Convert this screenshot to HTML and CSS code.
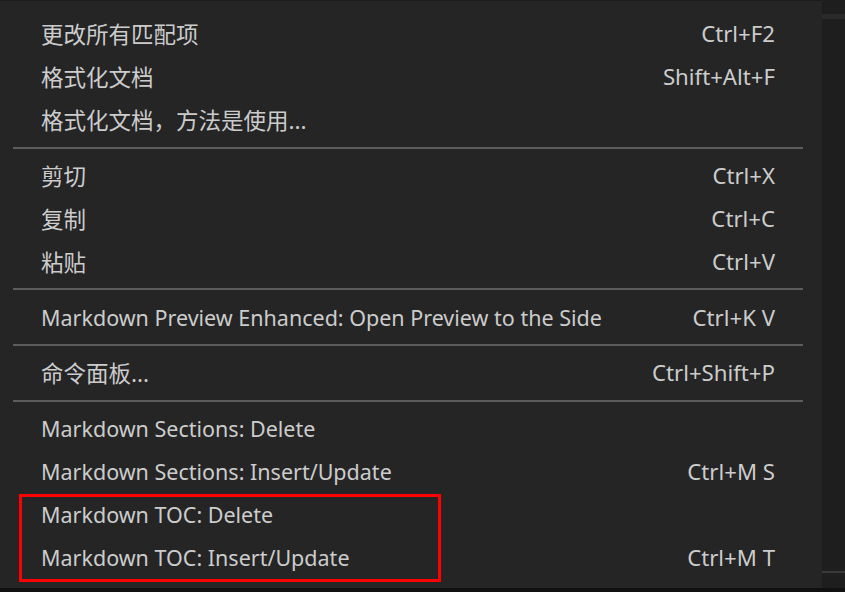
FILE: index.html
```html
<!DOCTYPE html>
<html lang="zh-CN">
<head>
<meta charset="utf-8">
<link rel="stylesheet" href="styles.css">
</head>
<body>
<div class="screen">
  <div class="menu">
    <div class="item"><span class="label cjk">更改所有匹配项</span><span class="key">Ctrl+F2</span></div>
    <div class="item"><span class="label cjk">格式化文档</span><span class="key">Shift+Alt+F</span></div>
    <div class="item"><span class="label cjk">格式化文档，方法是使用...</span></div>
    <div class="sep"></div>
    <div class="item"><span class="label cjk">剪切</span><span class="key">Ctrl+X</span></div>
    <div class="item"><span class="label cjk">复制</span><span class="key">Ctrl+C</span></div>
    <div class="item"><span class="label cjk">粘贴</span><span class="key">Ctrl+V</span></div>
    <div class="sep"></div>
    <div class="item"><span class="label">Markdown Preview Enhanced: Open Preview to the Side</span><span class="key">Ctrl+K V</span></div>
    <div class="sep"></div>
    <div class="item"><span class="label cjk">命令面板...</span><span class="key">Ctrl+Shift+P</span></div>
    <div class="sep"></div>
    <div class="item"><span class="label">Markdown Sections: Delete</span></div>
    <div class="item"><span class="label">Markdown Sections: Insert/Update</span><span class="key">Ctrl+M S</span></div>
    <div class="item"><span class="label">Markdown TOC: Delete</span></div>
    <div class="item"><span class="label">Markdown TOC: Insert/Update</span><span class="key">Ctrl+M T</span></div>
    <div class="highlight"></div>
  </div>
  <div class="side">
    <div class="side-band top"></div>
    <div class="side-band bottom"></div>
  </div>
</div>
<div class="floor"></div>
</body>
</html>
```
FILE: styles.css
```css
html, body {
  margin: 0;
  padding: 0;
  background: #1e1e1e;
  width: 845px;
  height: 592px;
  overflow: hidden;
  font-family: "Noto Sans", "Noto Sans CJK SC", sans-serif;
}
.screen {
  display: flex;
  height: 588px;
}
.menu {
  position: relative;
  width: 822px;
  box-sizing: border-box;
  background: #252526;
  padding: 11px 0 7px;
  border-top: 1px solid #1b1b1b;
  box-shadow: 2px 0 3px #111;
}
.item {
  display: flex;
  justify-content: space-between;
  align-items: center;
  height: 43px;
  padding: 0 47px 0 41px;
  color: #cccccc;
  font-size: 21.5px;
  white-space: nowrap;
}
.label.cjk {
  font-size: 22.5px;
}
.key {
  font-size: 22.2px;
}
.sep {
  height: 2px;
  margin: 5.5px 19px 5.25px 13px;
  background: #5c5c5c;
}
.highlight {
  position: absolute;
  left: 19px;
  top: 493px;
  width: 416px;
  height: 82px;
  border: 3px solid #ff0000;
}
.side {
  flex: 1;
  position: relative;
  background: #1e1e1e;
}
.side-band {
  position: absolute;
  left: 0;
  right: 0;
}
.side-band.top {
  top: 14px;
  height: 5px;
  background: #2a2a2b;
}
.side-band.bottom {
  top: 571px;
  height: 2px;
  background: #3a3a3a;
}
.floor {
  height: 4px;
  background: #111;
}
```
